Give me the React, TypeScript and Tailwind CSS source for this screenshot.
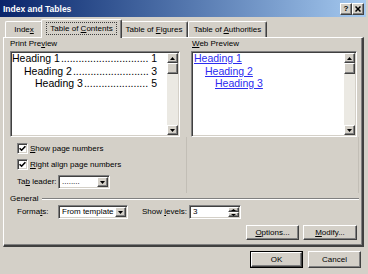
import React from "react";

const raised =
  "border border-t-white border-l-white border-r-[#404040] border-b-[#404040] shadow-[inset_-1px_-1px_0_#808080]";
const sunken =
  "border border-t-[#808080] border-l-[#808080] border-r-white border-b-white shadow-[inset_1px_1px_0_#404040,inset_-1px_-1px_0_#d4d0c8]";

function Tri({ up = false, w = 7, h = 4 }: { up?: boolean; w?: number; h?: number }) {
  return (
    <svg width={w} height={h} viewBox={`0 0 ${w} ${h}`} className="block">
      <polygon
        points={up ? `0,${h} ${w},${h} ${w / 2},0` : `0,0 ${w},0 ${w / 2},${h}`}
        fill="#000"
      />
    </svg>
  );
}

function VScroll() {
  return (
    <div className="flex w-[11px] shrink-0 flex-col bg-[#ebe9e3]">
      <div className={`${raised} flex h-[10px] items-center justify-center bg-[#d4d0c8]`}>
        <Tri up w={5} h={3} />
      </div>
      <div className={`${raised} h-[11px] bg-[#d4d0c8]`} />
      <div className="flex-1" />
      <div className={`${raised} flex h-[10px] items-center justify-center bg-[#d4d0c8]`}>
        <Tri w={5} h={3} />
      </div>
    </div>
  );
}

function TocRow({ label, n, pad, dots }: { label: string; n: string; pad: string; dots: number }) {
  return (
    <div className={`flex justify-between ${pad}`}>
      <span className="whitespace-nowrap">
        {label}
        <span className="ml-px">{".".repeat(dots)}</span>
      </span>
      <span>{n}</span>
    </div>
  );
}

function CheckRow({ children }: { children: React.ReactNode }) {
  return (
    <div className="flex h-[11px] items-center">
      <div className={`${sunken} flex h-[11px] w-[11px] items-center justify-center bg-white`}>
        <svg width="7" height="7" viewBox="0 0 7 7" className="block">
          <path d="M0.6 3.2 L2.6 5.2 L6.4 1.2" stroke="#000" strokeWidth="1.6" fill="none" />
        </svg>
      </div>
      <span className="ml-[2px] whitespace-nowrap">{children}</span>
    </div>
  );
}

function DropBtn() {
  return (
    <div className={`${raised} flex h-[10px] w-[11px] shrink-0 items-center justify-center bg-[#d4d0c8]`}>
      <Tri w={5} h={3} />
    </div>
  );
}

function Tab({
  children,
  w,
  selected = false,
}: {
  children: React.ReactNode;
  w: string;
  selected?: boolean;
}) {
  if (selected) {
    return (
      <div
        className={`relative z-10 -mx-[2px] -mb-px flex h-[19px] ${w} items-start justify-center rounded-t-[2px] border-l border-t border-r border-l-white border-t-white border-r-[#404040] bg-[#d4d0c8] pt-[2px] shadow-[inset_-1px_0_0_#808080]`}
      >
        <span className="border border-dotted border-[#404040] px-[3px] leading-[11px]">
          {children}
        </span>
      </div>
    );
  }
  return (
    <div
      className={`flex h-[16px] ${w} items-center justify-center rounded-t-[2px] border-l border-t border-r border-l-white border-t-white border-r-[#404040] shadow-[inset_-1px_0_0_#808080]`}
    >
      <span className="whitespace-nowrap leading-[11px]">{children}</span>
    </div>
  );
}

function U({ children }: { children: React.ReactNode }) {
  return <span className="underline underline-offset-[1px]">{children}</span>;
}

export default function App() {
  return (
    <div className="flex h-[274px] w-[368px] flex-col overflow-hidden bg-[#d4d0c8] font-['Liberation_Sans',Arial,sans-serif] text-[8px] leading-[10px] text-black">
      {/* Title bar */}
      <div className="mr-[2px] flex h-[17px] shrink-0 items-center bg-gradient-to-r from-[#0a246a] to-[#a6caf0] pl-[3px] pr-[2px]">
        <span className="flex-1 text-[8.5px] font-bold text-white">Index and Tables</span>
        <div className={`${raised} flex h-[12px] w-[12px] items-center justify-center bg-[#d4d0c8] text-[8px] font-bold leading-none`}>
          ?
        </div>
        <div className={`${raised} flex h-[12px] w-[12px] items-center justify-center bg-[#d4d0c8]`}>
          <svg width="6" height="6" viewBox="0 0 6 6" className="block">
            <path d="M0.5 0.5 L5.5 5.5 M5.5 0.5 L0.5 5.5" stroke="#000" strokeWidth="1.5" />
          </svg>
        </div>
      </div>

      {/* Tabs */}
      <div className="flex h-[20px] shrink-0 items-end pl-[5px]">
        <Tab w="w-[38px]">
          Inde<U>x</U>
        </Tab>
        <Tab w="w-[81px]" selected>
          Table of <U>C</U>ontents
        </Tab>
        <Tab w="w-[68px]">
          Table of <U>F</U>igures
        </Tab>
        <Tab w="w-[79px]">
          Table of <U>A</U>uthorities
        </Tab>
      </div>

      {/* Panel */}
      <div className="ml-[3px] flex h-[210px] w-[361px] shrink-0 flex-col border-l border-t border-l-white border-t-white border-r-2 border-b-2 border-r-[#404040] border-b-[#404040] pl-[6px] shadow-[inset_-1px_-1px_0_#808080]">
        <div className="flex h-[155px] shrink-0">
          {/* Left column */}
          <div className="flex w-[170px] flex-col">
            <div className="h-[13px] pt-px">
              Print Pre<U>v</U>iew
            </div>
            <div className={`${sunken} flex h-[86px] w-[170px] bg-white p-px`}>
              <div className="-mt-px min-w-0 flex-1 pr-[10px] text-[10.5px] leading-[12.5px]">
                <TocRow label="Heading 1" n="1" pad="pl-0" dots={30} />
                <TocRow label="Heading 2" n="3" pad="pl-[12px]" dots={26} />
                <TocRow label="Heading 3" n="5" pad="pl-[23px]" dots={22} />
              </div>
              <VScroll />
            </div>
            <div className="ml-[7px] mt-[6px]">
              <CheckRow>
                <U>S</U>how page numbers
              </CheckRow>
            </div>
            <div className="ml-[7px] mt-[5px]">
              <CheckRow>
                <U>R</U>ight align page numbers
              </CheckRow>
            </div>
            <div className="ml-[7px] mt-[5px] flex h-[14px] items-center">
              <span className="w-[41px] whitespace-nowrap">
                Ta<U>b</U> leader:
              </span>
              <div className={`${sunken} flex h-[14px] w-[52px] items-center bg-white p-px`}>
                <span className="flex-1 pl-[2px] leading-[8px]">........</span>
                <DropBtn />
              </div>
            </div>
          </div>

          {/* Right column */}
          <div className="ml-[11px] flex w-[166px] flex-col">
            <div className="h-[13px] pt-px pl-px">
              <U>W</U>eb Preview
            </div>
            <div className={`${sunken} flex h-[86px] w-[166px] bg-white p-px`}>
              <div className="-mt-px min-w-0 flex-1 pl-px text-[10.5px] leading-[12.5px] text-[#2b2bef]">
                <div>
                  <span className="underline">Heading 1</span>
                </div>
                <div className="pl-[11px]">
                  <span className="underline">Heading 2</span>
                </div>
                <div className="pl-[21px]">
                  <span className="underline">Heading 3</span>
                </div>
              </div>
              <VScroll />
            </div>
            <div className="-ml-[5px] w-[173px] flex-1 border-l border-r border-[#c2beb6]" />
          </div>
        </div>

        {/* General */}
        <div className="mr-[3px] flex h-[11px] shrink-0 items-center">
          <span className="whitespace-nowrap">General</span>
          <div className="ml-[4px] mt-px h-[2px] flex-1 border-t border-b border-t-[#808080] border-b-white" />
        </div>

        <div className="ml-[7px] mt-px flex h-[14px] shrink-0 items-center">
          <span className="w-[41px] whitespace-nowrap">
            Forma<U>t</U>s:
          </span>
          <div className={`${sunken} flex h-[14px] w-[70px] items-center bg-white p-px`}>
            <span className="flex-1 whitespace-nowrap pl-[2px] leading-[8px]">From template</span>
            <DropBtn />
          </div>
          <span className="ml-[14px] w-[47px] whitespace-nowrap">
            Show <U>l</U>evels:
          </span>
          <div className={`${sunken} flex h-[14px] w-[52px] items-center bg-white p-px`}>
            <span className="flex-1 pl-[2px] leading-[8px]">3</span>
            <div className="flex h-[10px] w-[11px] flex-col">
              <div className={`${raised} flex h-[5px] items-center justify-center bg-[#d4d0c8]`}>
                <Tri up w={5} h={2} />
              </div>
              <div className={`${raised} flex h-[5px] items-center justify-center bg-[#d4d0c8]`}>
                <Tri w={5} h={2} />
              </div>
            </div>
          </div>
        </div>

        <div className="mr-[5px] mt-[6px] flex h-[15px] shrink-0 justify-end gap-[4px]">
          <div className={`${raised} flex w-[53px] items-center justify-center bg-[#d4d0c8]`}>
            <span>
              <U>O</U>ptions...
            </span>
          </div>
          <div className={`${raised} flex w-[54px] items-center justify-center bg-[#d4d0c8]`}>
            <span>
              <U>M</U>odify...
            </span>
          </div>
        </div>
      </div>

      {/* Bottom buttons */}
      <div className="mt-[4px] flex h-[17px] shrink-0 justify-end gap-[5px] pr-[7px]">
        <div className="flex w-[53px] border border-black">
          <div className={`${raised} flex flex-1 items-center justify-center bg-[#d4d0c8]`}>OK</div>
        </div>
        <div className={`${raised} flex w-[53px] items-center justify-center bg-[#d4d0c8]`}>Cancel</div>
      </div>
    </div>
  );
}
